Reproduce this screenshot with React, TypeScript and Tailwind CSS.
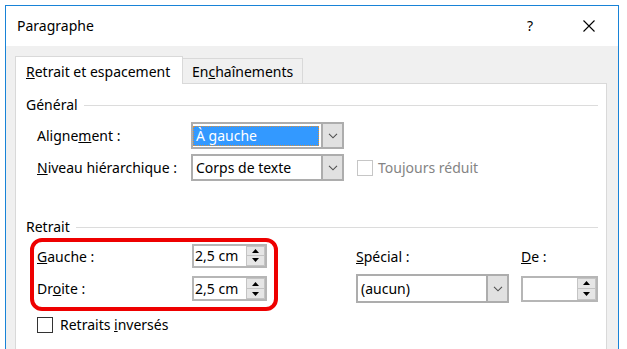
import React from "react";

function Chevron() {
  return (
    <svg width="10" height="6" viewBox="0 0 10 6">
      <path d="M1 0.8 L5 4.8 L9 0.8" fill="none" stroke="#505050" strokeWidth="1.1" />
    </svg>
  );
}

function Combo({ width, height, text, selected }: { width: string; height: string; text: string; selected?: boolean }) {
  return (
    <div className={`flex border-2 border-[#adadad] bg-white ${width} ${height}`}>
      <div className="flex-1 flex items-center">
        {selected ? (
          <div className="h-[20px] w-[126px] bg-[#3399ff] text-white border border-dotted border-[#d9903d] pl-[2px] leading-[18px]">
            {text}
          </div>
        ) : (
          <span className="pl-[3px]">{text}</span>
        )}
      </div>
      <div className="w-[21px] bg-[#e1e1e1] border-l-2 border-[#adadad] flex items-center justify-center">
        <Chevron />
      </div>
    </div>
  );
}

function Arrow({ down }: { down?: boolean }) {
  return (
    <svg width="7" height="4" viewBox="0 0 7 4">
      <path d={down ? "M0 0 L7 0 L3.5 4Z" : "M0 4 L3.5 0 L7 4Z"} fill="#000" />
    </svg>
  );
}

function Spinner({ width, height, value }: { width: string; height: string; value: string }) {
  return (
    <div className={`flex border-2 border-[#b6b6b6] bg-white ${width} ${height}`}>
      <div className="flex-1 flex items-center pl-[1px]">{value}</div>
      <div className="w-[19px] flex flex-col">
        <div className="flex-1 bg-[#e6e6e6] border border-[#c4c4c4] flex items-center justify-center">
          <Arrow />
        </div>
        <div className="flex-1 bg-[#e6e6e6] border border-t-0 border-[#c4c4c4] flex items-center justify-center">
          <Arrow down />
        </div>
      </div>
    </div>
  );
}

function SectionTitle({ label, className }: { label: string; className: string }) {
  return (
    <div className={`flex items-center h-[20px] pl-[10px] pr-[8px] ${className}`}>
      <span>{label}</span>
      <div className="flex-1 h-px bg-[#dcdcdc] ml-[6px]" />
    </div>
  );
}

export default function App() {
  return (
    <div className="relative w-[627px] h-[349px] overflow-hidden bg-white pt-[5px] pl-[5px] font-['Noto_Sans',sans-serif] text-[14px] leading-[20px] text-black">
      <div className="w-[614px] h-[344px] overflow-hidden border border-b-0 border-[#1883d7] bg-[#f0f0f0]">
        {/* title bar */}
        <div className="h-[40px] bg-white flex items-center pl-[11px] pr-[23px]">
          <span>Paragraphe</span>
          <span className="ml-auto">?</span>
          <svg className="ml-[50px]" width="12" height="12" viewBox="0 0 12 12">
            <path d="M0.5 0.5 L11.5 11.5 M11.5 0.5 L0.5 11.5" stroke="#000" strokeWidth="1.1" />
          </svg>
        </div>

        <div className="pl-[9px] pr-[11px] pt-[10px]">
          {/* tabs */}
          <div className="flex items-start h-[27px]">
            <div className="relative z-10 w-[168px] h-[28px] bg-white border border-b-0 border-[#d9d9d9] pl-[10px] pt-[5px]">
              <span className="underline">R</span>etrait et espacement
            </div>
            <div className="w-[120px] h-[25px] mt-[2px] border border-l-0 border-b-0 border-[#d9d9d9] bg-[#f0f0f0] pl-[9px] pt-[3px]">
              En<span className="underline">c</span>haînements
            </div>
          </div>

          {/* panel */}
          <div className="h-[300px] bg-white border border-[#d9d9d9]">
            <SectionTitle label="Général" className="mt-[11px]" />

            <div className="flex items-center h-[27px] mt-[7px] pl-[21px]">
              <div className="w-[154px]">
                Aligne<span className="underline">m</span>ent :
              </div>
              <Combo width="w-[153px]" height="h-[27px]" text="À gauche" selected />
            </div>

            <div className="flex items-center h-[27px] mt-[5px] pl-[21px]">
              <div className="w-[154px]">
                <span className="underline">N</span>iveau hiérarchique :
              </div>
              <Combo width="w-[153px]" height="h-[27px]" text="Corps de texte" />
              <div className="ml-[13px] w-[16px] h-[16px] border border-[#c6c6c6] bg-white" />
              <span className="ml-[5px] text-[#848484]">Toujours réduit</span>
            </div>

            <SectionTitle label="Retrait" className="mt-[36px]" />

            <div className="flex items-center h-[25px] mt-[6px] pl-[21px]">
              <div className="w-[155px] pt-[3px]">
                <span className="underline">G</span>auche :
              </div>
              <Spinner width="w-[75px]" height="h-[24px]" value="2,5 cm" />
              <div className="ml-[89px] w-[165px] pt-[3px]">
                <span className="underline">S</span>pécial :
              </div>
              <div className="pt-[3px]">
                <span className="underline">D</span>e :
              </div>
            </div>

            <div className="flex items-center h-[29px] mt-[6px] pl-[21px]">
              <div className="w-[155px]">
                Dr<span className="underline">o</span>ite :
              </div>
              <Spinner width="w-[75px]" height="h-[25px]" value="2,5 cm" />
              <div className="ml-[89px]">
                <Combo width="w-[153px]" height="h-[29px]" text="(aucun)" />
              </div>
              <div className="ml-[12px]">
                <Spinner width="w-[77px]" height="h-[26px]" value="" />
              </div>
            </div>

            <div className="flex items-center h-[16px] mt-[14px] pl-[21px]">
              <div className="w-[16px] h-[16px] border border-[#333333] bg-white" />
              <span className="ml-[7px]">
                Retraits <span className="underline">i</span>nversés
              </span>
            </div>
          </div>
        </div>
      </div>

      {/* red annotation around the indent fields */}
      <div className="absolute left-[30px] top-[238px] w-[248px] h-[73px] border-4 border-[#ee0000] rounded-[12px]" />
    </div>
  );
}
